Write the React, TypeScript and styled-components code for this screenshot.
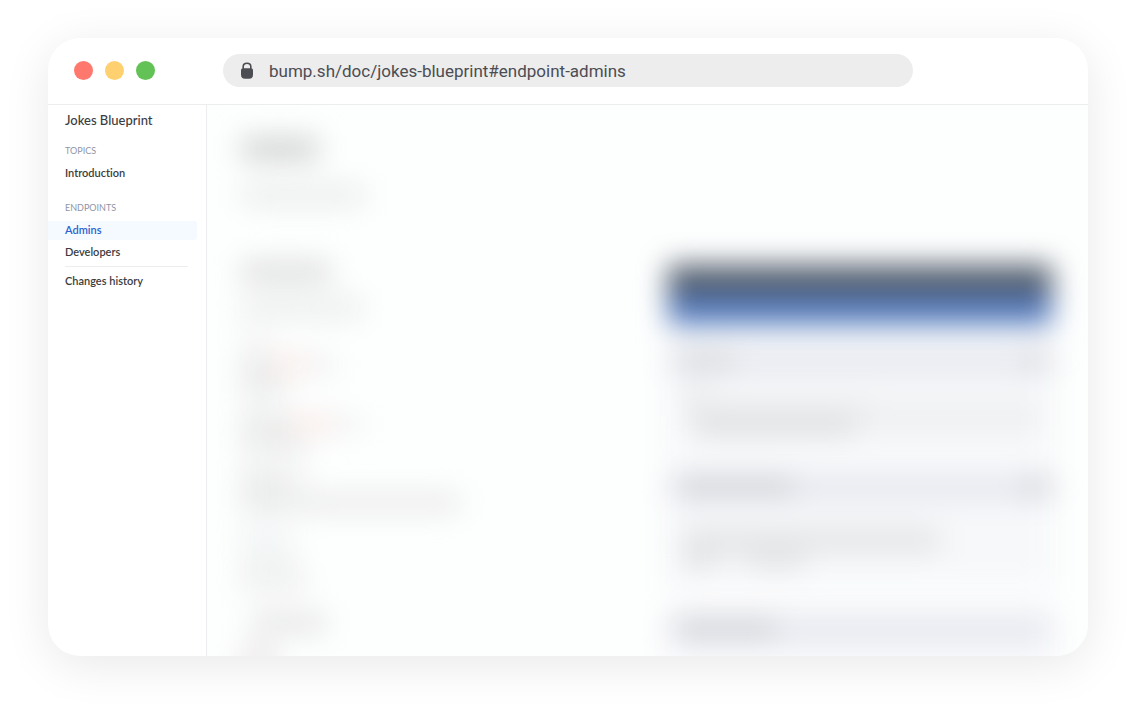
import React from "react";
import styled, { createGlobalStyle } from "styled-components";

const GlobalStyle = createGlobalStyle`
  *, *::before, *::after { box-sizing: border-box; }
  body {
    margin: 0;
    background: #ffffff;
    color: #3b3c40;
    font-family: Lato, "Open Sans", sans-serif;
    font-variant-ligatures: none;
  }
`;

const Page = styled.div`
  display: flex;
  min-height: 100vh;
  padding: 38px 48px 56px;
`;

const BrowserWindow = styled.div`
  display: flex;
  flex: 1;
  flex-direction: column;
  min-width: 0;
  overflow: hidden;
  border-radius: 32px;
  background: #ffffff;
  box-shadow: 0 9px 48px rgba(0, 0, 0, 0.09);
`;

const TitleBar = styled.header`
  display: grid;
  grid-template-columns: 175px minmax(0, 1fr) 175px;
  align-items: center;
  height: 67px;
  padding-bottom: 1px;
  border-bottom: 1px solid #ededef;
`;

const WindowControls = styled.div`
  display: flex;
  gap: 12px;
  padding-left: 26px;
`;

const WindowControl = styled.button<{ $color: string }>`
  width: 19px;
  height: 19px;
  padding: 0;
  border: 0;
  border-radius: 50%;
  background: ${({ $color }) => $color};
`;

const AddressBar = styled.label`
  display: flex;
  align-items: center;
  gap: 16px;
  height: 33px;
  padding: 0 18px;
  border-radius: 17px;
  background: #ededed;
`;

const AddressInput = styled.input`
  flex: 1;
  min-width: 0;
  padding: 0;
  border: 0;
  outline: 0;
  background: transparent;
  color: #4c4c53;
  font: 400 17px/20px Roboto, sans-serif;
`;

const LockIcon = () => (
  <svg width="12" height="17" viewBox="0 0 12 17" aria-hidden="true">
    <path d="M2.2 8V4.6C2.2 2.5 3.9 1.3 6 1.3S9.8 2.5 9.8 4.6V8" fill="none" stroke="#4c4c53" strokeWidth="1.6" />
    <path
      d="M2.4 6.2h7.2C11.2 6.2 12 7 12 8.600v4.100c0 2.700-1.300 4-4 4H4c-2.700 0-4-1.300-4-4V8.600C0 7 .8 6.200 2.400 6.200Z"
      fill="#4c4c53"
    />
  </svg>
);

const Body = styled.div`
  display: flex;
  flex: 1;
  min-height: 0;
`;

const Sidebar = styled.nav`
  width: 159px;
  padding-top: 5px;
  border-right: 1px solid #ededef;
`;

const DocTitle = styled.h1`
  margin: 0;
  padding-left: 17px;
  font-size: 13px;
  font-weight: 500;
  line-height: 20px;
`;

const GroupTitle = styled.h2<{ $gap: number }>`
  margin: ${({ $gap }) => $gap}px 0 7px;
  padding-left: 17px;
  color: #9095a6;
  font-size: 9px;
  font-weight: 400;
  line-height: 12px;
  text-transform: uppercase;
`;

const NavList = styled.ul`
  display: flex;
  flex-direction: column;
  gap: 3px;
  margin: 0;
  padding: 0 9px 0 0;
  list-style: none;
`;

const NavLink = styled.a<{ $active?: boolean }>`
  display: block;
  padding: 0 0 1px 17px;
  border-radius: 0 3px 3px 0;
  background: ${({ $active }) => ($active ? "#f4faff" : "transparent")};
  color: ${({ $active }) => ($active ? "#2a62cf" : "inherit")};
  font-size: 11px;
  font-weight: 600;
  line-height: 18px;
  text-decoration: none;
`;

const Divider = styled.hr`
  margin: 4px 18px 5px 17px;
  border: 0;
  border-top: 1px solid #ededef;
`;

const Main = styled.main`
  flex: 1;
  min-width: 0;
  overflow: hidden;
  background: #fdfefe;
`;

const Preview = styled.div`
  display: grid;
  grid-template-columns: minmax(0, 33fr) minmax(0, 32fr);
  gap: 30px;
  height: 551px;
  padding: 33px 36px 0 35px;
  filter: blur(14px);
`;

const Column = styled.div<{ $offset?: number }>`
  padding-top: ${({ $offset = 0 }) => $offset}px;
`;

const Line = styled.div<{ $gap: number }>`
  display: flex;
  margin-top: ${({ $gap }) => $gap}px;
`;

const Bar = styled.div<{ $width: number; $height: number; $color: string; $indent?: number }>`
  width: ${({ $width }) => $width}px;
  height: ${({ $height }) => $height}px;
  margin-left: ${({ $indent = 0 }) => $indent}px;
  background: ${({ $color }) => $color};
`;

const Band = styled.div<{ $color: string }>`
  height: 30px;
  background: ${({ $color }) => $color};
`;

const PanelHeader = styled.div<{ $gap: number }>`
  display: flex;
  align-items: center;
  justify-content: space-between;
  height: 32px;
  margin-top: ${({ $gap }) => $gap}px;
  padding-left: 10px;
  background: #e8eaf0;
`;

const PanelBody = styled.div<{ $height: number }>`
  height: ${({ $height }) => $height}px;
  padding: 12px 0 0 14px;
  background: #f6f8fa;
`;

type Segment = [width: number, color: string];
type TextLine = { gap: number; height: number; indent?: number; segments: Segment[] };

const article: TextLine[] = [
  { gap: 0, height: 22, segments: [[76, "#cfd1d1"]] },
  { gap: 26, height: 18, segments: [[122, "#e8eaea"]] },
  { gap: 58, height: 20, segments: [[88, "#dcdddd"]] },
  { gap: 16, height: 20, segments: [[120, "#ebeded"]] },
  { gap: 12, height: 16, segments: [[26, "#f2f3f3"]] },
  { gap: 10, height: 18, segments: [[30, "#e4e5e5"], [30, "#fbeae5"], [34, "#f1f1f1"]] },
  { gap: 4, height: 16, segments: [[42, "#e7e8e8"]] },
  { gap: 4, height: 12, segments: [[38, "#f5f6f6"]] },
  { gap: 6, height: 16, segments: [[48, "#e4e5e5"], [36, "#fbeae5"], [36, "#f1f1f1"]] },
  { gap: 4, height: 16, segments: [[64, "#e9eaea"]] },
  { gap: 4, height: 12, segments: [[62, "#f5f6f6"]] },
  { gap: 6, height: 16, segments: [[46, "#e4e5e5"], [18, "#f2f2f2"]] },
  { gap: 4, height: 18, segments: [[26, "#e7e8e8"], [192, "#e9eaea"]] },
  { gap: 14, height: 18, segments: [[46, "#f0f3f4"]] },
  { gap: 8, height: 18, segments: [[54, "#edefee"]] },
  { gap: 4, height: 18, segments: [[64, "#eeefef"]] },
  { gap: 22, height: 18, indent: 10, segments: [[74, "#e3e4e4"]] },
  { gap: 14, height: 24, segments: [[34, "#e9e5e5"]] },
];

const requestLines: TextLine[] = [
  { gap: 0, height: 12, segments: [[30, "#ebeced"]] },
  { gap: 2, height: 16, segments: [[190, "#e8e9ea"], [170, "#eeeff0"]] },
  { gap: 0, height: 18, indent: 12, segments: [[160, "#dfe0e1"], [188, "#f1f2f3"]] },
];

const responseLines: TextLine[] = [
  { gap: 14, height: 24, segments: [[258, "#e4e5e6"]] },
  { gap: 0, height: 18, segments: [[32, "#e3e4e5"], [36, "#f2f3f4"], [54, "#e4e5e6"]] },
];

const Lines = ({ lines }: { lines: TextLine[] }) => (
  <>
    {lines.map((line, row) => (
      <Line key={row} $gap={line.gap}>
        {line.segments.map(([width, color], i) => (
          <Bar key={i} $width={width} $height={line.height} $color={color} $indent={i === 0 ? line.indent : 0} />
        ))}
      </Line>
    ))}
  </>
);

export default function App() {
  return (
    <>
      <GlobalStyle />
      <Page>
        <BrowserWindow>
          <TitleBar>
            <WindowControls>
              <WindowControl type="button" aria-label="Close" $color="#ff786e" />
              <WindowControl type="button" aria-label="Minimize" $color="#ffd070" />
              <WindowControl type="button" aria-label="Zoom" $color="#63c255" />
            </WindowControls>
            <AddressBar>
              <LockIcon />
              <AddressInput
                type="text"
                aria-label="Address"
                readOnly
                value="bump.sh/doc/jokes-blueprint#endpoint-admins"
              />
            </AddressBar>
          </TitleBar>
          <Body>
            <Sidebar>
              <DocTitle>Jokes Blueprint</DocTitle>
              <GroupTitle $gap={15}>Topics</GroupTitle>
              <NavList>
                <li><NavLink href="#introduction">Introduction</NavLink></li>
              </NavList>
              <GroupTitle $gap={19}>Endpoints</GroupTitle>
              <NavList>
                <li><NavLink href="#endpoint-admins" $active aria-current="page">Admins</NavLink></li>
                <li><NavLink href="#endpoint-developers">Developers</NavLink></li>
              </NavList>
              <Divider />
              <NavList>
                <li><NavLink href="#changes">Changes history</NavLink></li>
              </NavList>
            </Sidebar>
            <Main>
              <Preview aria-hidden="true">
                <Column>
                  <Lines lines={article} />
                </Column>
                <Column $offset={127}>
                  <Band $color="#525d6c" />
                  <Band $color="#567cbe" />
                  <PanelHeader $gap={19}>
                    <Bar $width={56} $height={18} $color="#d8d9dc" />
                    <Bar $width={28} $height={18} $color="#dadbdf" />
                  </PanelHeader>
                  <PanelBody $height={82}>
                    <Lines lines={requestLines} />
                  </PanelBody>
                  <PanelHeader $gap={12}>
                    <Bar $width={116} $height={18} $color="#d2d3d8" />
                    <Bar $width={28} $height={20} $color="#d6d7db" />
                  </PanelHeader>
                  <PanelBody $height={84}>
                    <Lines lines={responseLines} />
                  </PanelBody>
                  <PanelHeader $gap={26}>
                    <Bar $width={98} $height={18} $color="#d2d3d8" />
                  </PanelHeader>
                  <PanelBody $height={24} />
                </Column>
              </Preview>
            </Main>
          </Body>
        </BrowserWindow>
      </Page>
    </>
  );
}
